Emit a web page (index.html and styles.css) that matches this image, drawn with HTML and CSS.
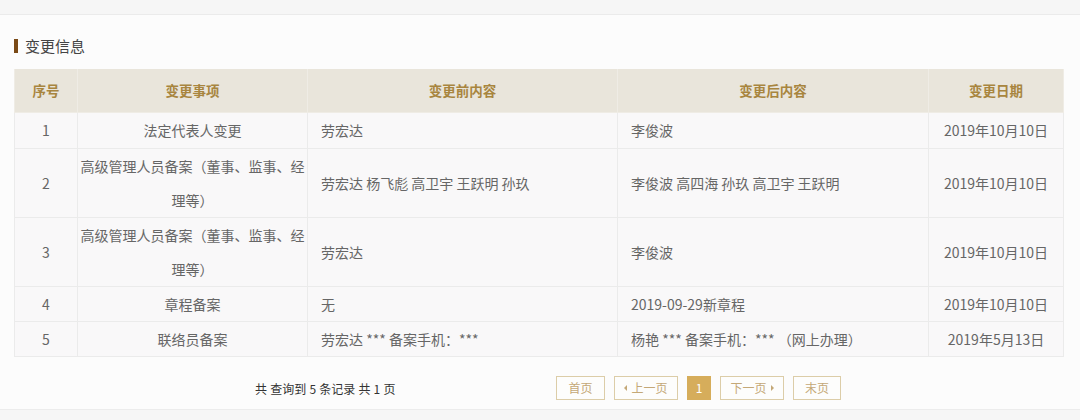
FILE: index.html
```html
<!DOCTYPE html>
<html lang="zh-CN">
<head>
<meta charset="utf-8">
<title>变更信息</title>
<link rel="stylesheet" href="styles.css">
</head>
<body>
<div class="topbar"></div>
<div class="section">
  <h2 class="title"><span class="bar"></span>变更信息</h2>
  <table class="grid">
    <colgroup>
      <col class="c-no"><col class="c-item"><col class="c-before"><col class="c-after"><col class="c-date">
    </colgroup>
    <thead>
      <tr><th>序号</th><th>变更事项</th><th>变更前内容</th><th>变更后内容</th><th>变更日期</th></tr>
    </thead>
    <tbody>
      <tr><td class="ctr">1</td><td class="item">法定代表人变更</td><td class="txt">劳宏达</td><td class="txt">李俊波</td><td class="ctr">2019年10月10日</td></tr>
      <tr><td class="ctr">2</td><td class="item">高级管理人员备案（董事、监事、经理等）</td><td class="txt">劳宏达 杨飞彪 高卫宇 王跃明 孙玖</td><td class="txt">李俊波 高四海 孙玖 高卫宇 王跃明</td><td class="ctr">2019年10月10日</td></tr>
      <tr><td class="ctr">3</td><td class="item">高级管理人员备案（董事、监事、经理等）</td><td class="txt">劳宏达</td><td class="txt">李俊波</td><td class="ctr">2019年10月10日</td></tr>
      <tr><td class="ctr">4</td><td class="item">章程备案</td><td class="txt">无</td><td class="txt">2019-09-29新章程</td><td class="ctr">2019年10月10日</td></tr>
      <tr><td class="ctr">5</td><td class="item">联络员备案</td><td class="txt">劳宏达 *** 备案手机：***</td><td class="txt">杨艳 *** 备案手机：*** （网上办理）</td><td class="ctr">2019年5月13日</td></tr>
    </tbody>
  </table>
  <div class="pager">
    <div class="info">共 查询到 5 条记录 共 1 页</div>
    <div class="btns">
      <a class="pbtn w49">首页</a>
      <a class="pbtn w64"><span class="tri-l"></span>上一页</a>
      <a class="pbtn cur">1</a>
      <a class="pbtn w64">下一页<span class="tri-r"></span></a>
      <a class="pbtn w48">末页</a>
    </div>
  </div>
</div>
<div class="footer"></div>
</body>
</html>
```

FILE: styles.css
```css
html, body {
  margin: 0;
  padding: 0;
}
body {
  background: #fcfcfc;
  font-family: "Noto Sans CJK SC", "Noto Sans", sans-serif;
  color: #666;
  width: 1080px;
  height: 420px;
  overflow: hidden;
}
.topbar {
  height: 14px;
  background: #f6f6f6;
  border-bottom: 1px solid #ebebeb;
}
.section {
  padding: 0 17px 0 14px;
}
.title {
  margin: 24px 0 16px;
  height: 14px;
  line-height: 14px;
  font-size: 15px;
  font-weight: normal;
  color: #444;
  display: flex;
  align-items: center;
  gap: 7px;
}
.bar {
  width: 4px;
  height: 14px;
  background: #7a4a16;
}
.grid {
  width: 1049px;
  table-layout: fixed;
  border-collapse: collapse;
  font-size: 14px;
}
.c-no { width: 63px; }
.c-item { width: 230px; }
.c-before { width: 310px; }
.c-after { width: 311px; }
.c-date { width: 135px; }
.grid th {
  background: #e9e5db;
  color: #a8853f;
  font-weight: bold;
  font-size: 13.5px;
  height: 43px;
  line-height: 43px;
  padding: 0;
  border: 1px solid #efece5;
  border-top: 0;
}
.grid td {
  background: #f9f8f9;
  line-height: 34px;
  padding: 0;
  border: 1px solid #ebebeb;
  vertical-align: middle;
}
.grid tbody tr:first-child td {
  line-height: 35px;
}
.grid .ctr { text-align: center; }
.grid .item { text-align: center; padding: 0; line-break: anywhere; }
.grid .txt { text-align: left; padding-left: 13px; }
.pager {
  margin-top: 19px;
  height: 24px;
  display: flex;
  align-items: center;
}
.info {
  margin-left: 241px;
  font-size: 12px;
  color: #333;
  width: 301px;
  word-spacing: 0.5px;
}
.btns {
  display: flex;
  gap: 9px;
}
.pbtn {
  box-sizing: border-box;
  height: 24px;
  line-height: 22px;
  border: 1px solid #dccda8;
  color: #c4a877;
  font-size: 12px;
  text-align: center;
  display: flex;
  align-items: center;
  justify-content: center;
  gap: 4px;
  background: #fdfdfc;
}
.w49 { width: 49px; }
.w48 { width: 48px; }
.w64 { width: 64px; }
.pbtn.cur {
  width: 24px;
  background: #d6ad5b;
  border-color: #d6ad5b;
  color: #fff;
}
.tri-l, .tri-r {
  width: 0;
  height: 0;
  border-top: 3px solid transparent;
  border-bottom: 3px solid transparent;
}
.tri-l { border-right: 3px solid #c4a877; }
.tri-r { border-left: 3px solid #c4a877; }
.footer {
  margin-top: 9px;
  border-top: 1px solid #ececec;
  background: #f6f6f6;
  height: 20px;
}
```
